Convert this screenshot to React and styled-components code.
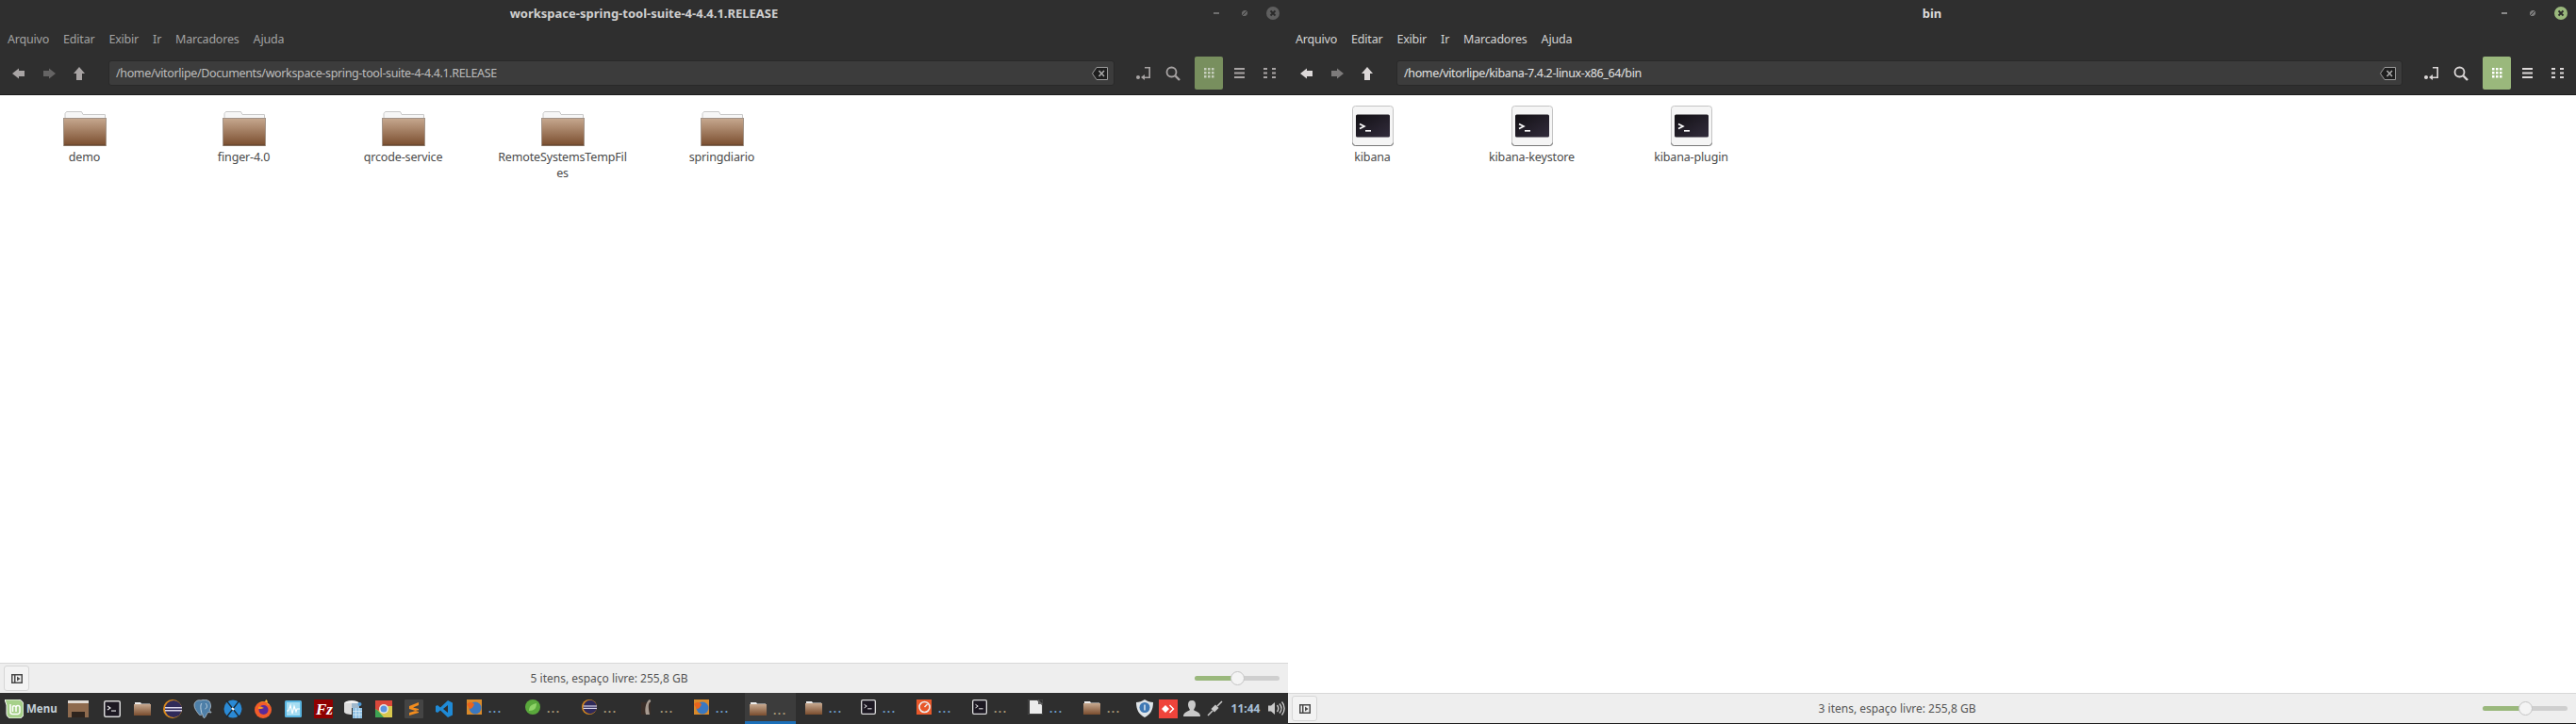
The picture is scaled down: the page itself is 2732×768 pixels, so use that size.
import React from "react";
import styled, { createGlobalStyle } from "styled-components";

const Global = createGlobalStyle`
  html, body { margin: 0; padding: 0; background: #fff; overflow: hidden; }
  * { box-sizing: border-box; }
  #root { font-family: "Noto Sans", "Open Sans", sans-serif; }
`;

const Desktop = styled.div`
  display: flex;
  width: 2732px;
  height: 768px;
`;
const LeftColumn = styled.div`
  display: flex;
  flex-direction: column;
  width: 1366px;
  height: 768px;
`;
const Win = styled.section`
  display: flex;
  flex-direction: column;
  flex: 1;
  min-height: 0;
  width: 1366px;
  background: #fff;
  border-bottom: ${(p) => (p.$active ? "1px solid #1c1c1c" : "none")};
`;
const Header = styled.header`
  background: #2f2f2f;
  border-bottom: 1px solid #1b1b1b;
  height: 101px;
  flex: none;
`;
const TitleBar = styled.div`
  display: grid;
  grid-template-columns: 1fr auto 1fr;
  align-items: center;
  height: 27px;
`;
const Title = styled.div`
  font-size: 13px;
  font-weight: 700;
  color: ${(p) => (p.$active ? "#dcdcdc" : "#cfcfcf")};
  text-align: center;
`;
const Controls = styled.div`
  display: flex;
  justify-content: flex-end;
  align-items: center;
  height: 27px;
  padding-right: 1px;
`;
const ControlBtn = styled.div`
  display: flex;
  align-items: center;
  justify-content: center;
  width: 30px;
  height: 27px;
`;
const MenuBar = styled.nav`
  display: flex;
  align-items: center;
  height: 33px;
  padding: 0 0 5px 8px;
  gap: 15px;
`;
const MenuItem = styled.span`
  font-size: 12.5px;
  letter-spacing: -0.2px;
  color: ${(p) => (p.$active ? "#d4d4d4" : "#a2a2a2")};
`;
const ToolBar = styled.div`
  display: flex;
  align-items: flex-start;
  height: 40px;
  padding: 0 4px;
`;
const ToolBtn = styled.div`
  display: flex;
  align-items: center;
  justify-content: center;
  width: 32px;
  height: 35px;
  color: ${(p) => (p.$active ? "#dcd8d8" : "#a8a4a4")};
  opacity: ${(p) => (p.$dim ? 0.45 : 1)};
`;
const ToggleBtn = styled.div`
  display: flex;
  align-items: center;
  justify-content: center;
  width: 30px;
  height: 35px;
  margin-left: 7px;
  margin-right: 1px;
  border-radius: 2px;
  background: ${(p) => (p.$active ? "#9ab87c" : "#788f5e")};
  color: ${(p) => (p.$active ? "#fff" : "#c5cdbb")};
`;
const Address = styled.div`
  display: flex;
  align-items: center;
  justify-content: space-between;
  flex: 1;
  height: 27px;
  margin: 4px 14px 0 15px;
  padding: 0 6px 0 7px;
  background: #3c3c3c;
  border: 1px solid #292929;
  border-radius: 3px;
  font-size: 12.5px;
  letter-spacing: -0.36px;
  color: ${(p) => (p.$active ? "#e2e2e2" : "#bdbdbd")};
`;
const Content = styled.main`
  flex: 1;
  min-height: 0;
  display: flex;
  align-items: flex-start;
  padding: 11px 0 0 5px;
  background: #fff;
`;
const Item = styled.div`
  display: flex;
  flex-direction: column;
  align-items: center;
  width: 169px;
`;
const IconSlot = styled.div`
  display: flex;
  align-items: flex-end;
  justify-content: center;
  height: 43px;
`;
const Label = styled.div`
  width: 140px;
  margin-top: 3px;
  font-size: 12.5px;
  line-height: 17px;
  letter-spacing: -0.15px;
  color: #4a4a4a;
  text-align: center;
  word-break: break-all;
`;
const Status = styled.footer`
  display: flex;
  align-items: center;
  flex: none;
  height: 32px;
  padding: 0 9px 0 4px;
  background: #eeeeee;
  border-top: 1px solid #d8d8d8;
`;
const PaneBtn = styled.div`
  display: flex;
  align-items: center;
  justify-content: center;
  width: 27px;
  height: 27px;
  background: #f3f3f3;
  border: 1px solid #d6d6d6;
  border-radius: 3px;
`;
const StatusText = styled.div`
  flex: 1;
  text-align: center;
  padding-right: 6px;
  font-size: 12px;
  color: #555;
`;
const Slider = styled.div`
  position: relative;
  width: 90px;
  height: 5px;
  border-radius: 3px;
  background: #cfcfcf;
`;
const SliderFill = styled.div`
  width: 50%;
  height: 100%;
  border-radius: 3px 0 0 3px;
  background: #9ab87c;
`;
const SliderThumb = styled.div`
  position: absolute;
  left: 38px;
  top: -5px;
  width: 15px;
  height: 15px;
  border-radius: 50%;
  background: #f4f4f4;
  border: 1px solid #c4c4c4;
`;
const Task = styled.div`
  display: flex;
  align-items: center;
  flex: none;
  height: 33px;
  padding-left: 5px;
  background: #2e2e2e;
`;
const MenuButton = styled.div`
  display: flex;
  align-items: center;
  gap: 3px;
  width: 60px;
  font-size: 11.5px;
  font-weight: 700;
  color: #c6d2da;
`;
const Launchers = styled.div`
  display: flex;
  align-items: center;
  margin-left: 2px;
`;
const Launcher = styled.div`
  display: flex;
  align-items: center;
  justify-content: center;
  width: 32px;
  height: 33px;
  &:first-child { margin-right: 4px; }
`;
const WinList = styled.div`
  display: flex;
  align-items: center;
  height: 33px;
  margin-left: 3px;
`;
const WinBtn = styled.div`
  display: flex;
  align-items: center;
  flex: none;
  width: ${(p) => p.$w}px;
  height: 33px;
`;
const WinInner = styled.div`
  display: flex;
  align-items: center;
  width: 54px;
  height: 33px;
  padding-left: 5px;
  gap: 7px;
  background: ${(p) => (p.$on ? "#3c3c3c" : "transparent")};
  border-bottom: 3px solid ${(p) => (p.$on ? "#1c6fb8" : "transparent")};
  padding-top: ${(p) => (p.$on ? "3px" : "0")};
`;
const Dots = styled.span`
  font-size: 12px;
  font-weight: 700;
  letter-spacing: 1.5px;
  color: ${(p) => (p.$warm ? "#a89a78" : "#6f9fcb")};
  padding-top: 3px;
`;
const Tray = styled.div`
  display: flex;
  align-items: center;
  margin-left: auto;
  height: 33px;
`;
const TraySlot = styled.div`
  display: flex;
  align-items: center;
  justify-content: center;
  width: 25px;
  height: 33px;
`;
const Clock = styled.div`
  width: 36px;
  margin: 0 2px;
  font-size: 12px;
  font-weight: 700;
  text-align: center;
  white-space: nowrap;
  color: #a9c0d6;
`;

/* ---------- drawings ---------- */
const Back = () => (
  <svg width="14" height="12" viewBox="0 0 14 12"><path d="M0 6 7 .5V3h6v6H7v2.500z" fill="currentColor" /></svg>
);
const Forward = () => (
  <svg width="14" height="12" viewBox="0 0 14 12"><path d="M14 6 7 .5V3H1v6h6v2.500z" fill="currentColor" /></svg>
);
const Up = () => (
  <svg width="12" height="14" viewBox="0 0 12 14"><path d="M6 0 12 7H9v7H3V7H0z" fill="currentColor" /></svg>
);
const Clear = () => (
  <svg width="17" height="14" viewBox="0 0 17 14">
    <path d="M5 .5h11.500v13H5L.5 7z" fill="#1e1e1e" stroke="#9c9c9c" />
    <path d="M7.500 4 13 10M13 4l-5.500 6" stroke="#a8a8a8" strokeWidth="1.600" />
  </svg>
);
const ReturnIcon = () => (
  <svg width="15" height="14" viewBox="0 0 15 14" fill="currentColor">
    <circle cx="2" cy="11" r="2" />
    <path d="M9 0h6v12H8v-1.600h5.400V1.600H9z" />
    <path d="M5 11 9 8v6z" />
  </svg>
);
const SearchIcon = () => (
  <svg width="16" height="16" viewBox="0 0 16 16" fill="none" stroke="currentColor">
    <circle cx="6.500" cy="6.500" r="5" strokeWidth="1.800" />
    <path d="M10.500 10.500 15 15" strokeWidth="2.400" />
  </svg>
);
const GridIcon = () => (
  <svg width="11" height="11" viewBox="0 0 11 11" fill="currentColor">
    {[0, 4, 8].flatMap((y) => [0, 4, 8].map((x) => <rect key={`${x}${y}`} x={x} y={y} width="2.500" height="2.500" />))}
  </svg>
);
const ListIcon = () => (
  <svg width="11" height="11" viewBox="0 0 11 11" fill="currentColor">
    <rect y="0" width="11" height="2" /><rect y="4.500" width="11" height="2" /><rect y="9" width="11" height="2" />
  </svg>
);
const CompactIcon = () => (
  <svg width="13" height="11" viewBox="0 0 13 11" fill="currentColor">
    {[0, 4.500, 9].flatMap((y) => [
      <rect key={`a${y}`} x="0" y={y} width="4" height="2" />,
      <rect key={`b${y}`} x="9" y={y} width="4" height="2" />,
    ])}
  </svg>
);
const PaneIcon = () => (
  <svg width="12" height="10" viewBox="0 0 12 10">
    <rect x=".75" y=".75" width="10.500" height="8.500" fill="none" stroke="#4a4a4a" strokeWidth="1.500" />
    <rect x="3" y="1" width="1.500" height="8" fill="#4a4a4a" />
    <path d="M6 2.500 9.500 5 6 7.500z" fill="#4a4a4a" />
  </svg>
);
const CloseIcon = ({ active }) => (
  <svg width="14" height="14" viewBox="0 0 14 14">
    <circle cx="7" cy="7" r="7" fill={active ? "#9ab87c" : "#5f5f5f"} />
    <path d="M4.500 4.500l5 5M9.500 4.500l-5 5" stroke="#2a2a2a" strokeWidth="1.800" />
  </svg>
);
const MinIcon = ({ active }) => (
  <svg width="6" height="2" viewBox="0 0 6 2"><rect width="6" height="2" fill={active ? "#8a8a8a" : "#6e6e6e"} /></svg>
);
const MaxIcon = ({ active }) => (
  <svg width="6" height="6" viewBox="0 0 6 6"><path d="M0 2 2 0h4v4L4 6H0z" fill={active ? "#7a7a7a" : "#666"} /><path d="M0 6 6 0" stroke="#2f2f2f" /></svg>
);

const BigFolder = () => (
  <svg width="46" height="37" viewBox="0 0 46 37">
    <defs>
      <linearGradient id="fb" x1="0" y1="0" x2="0" y2="1">
        <stop offset="0" stopColor="#c6a88f" />
        <stop offset="1" stopColor="#7a4d2e" />
      </linearGradient>
    </defs>
    <path d="M2 8V2.500L3.500 .5h16L21 3.500h23.500V8z" fill="#f6f6f6" stroke="#c8c8c8" />
    <rect x=".5" y="7.500" width="45" height="29" fill="url(#fb)" stroke="#a39488" />
    <rect x="1" y="35" width="44" height="1.500" fill="#6b4a33" />
  </svg>
);
const BigTerminal = () => (
  <svg width="44" height="43" viewBox="0 0 44 43">
    <defs>
      <linearGradient id="tb" x1="0" y1="0" x2="1" y2="1">
        <stop offset="0" stopColor="#121014" />
        <stop offset="1" stopColor="#322c3c" />
      </linearGradient>
    </defs>
    <rect x=".5" y=".5" width="43" height="42" rx="3" fill="#f5f5f5" stroke="#c4c4c4" />
    <path d="M.5 39.500v.000a3 3 0 0 0 3 3h37a3 3 0 0 0 3-3" fill="none" stroke="#777" />
    <rect x="4" y="9.500" width="36" height="24" rx="1.500" fill="url(#tb)" />
    <path d="M8 19.500l5 2.500-5 2.500" fill="none" stroke="#fff" strokeWidth="1.600" />
    <rect x="14" y="26" width="6" height="1.600" fill="#fff" />
  </svg>
);
const SmallFolder = ({ w = 18 }) => (
  <svg width={w} height="15" viewBox="0 0 18 15">
    <defs>
      <linearGradient id="sf" x1="0" y1="0" x2="0" y2="1">
        <stop offset="0" stopColor="#c6a88f" />
        <stop offset="1" stopColor="#7a4d2e" />
      </linearGradient>
    </defs>
    <path d="M1 3V1h6l1 1.500h9V3z" fill="#eee" />
    <rect y="3" width="18" height="12" fill="url(#sf)" />
  </svg>
);
const SmallTerminal = ({ s = 18 }) => (
  <svg width={s} height={s} viewBox="0 0 18 18">
    <rect x=".75" y=".75" width="16.500" height="16.500" rx="1.500" fill="#1c1822" stroke="#d8d8d8" strokeWidth="1.500" />
    <path d="M4 6l3 2-3 2" fill="none" stroke="#eee" strokeWidth="1.100" />
    <rect x="8" y="10.500" width="5" height="1.100" fill="#eee" />
  </svg>
);
const Mint = () => (
  <svg width="20" height="20" viewBox="0 0 20 20">
    <path d="M0 0h14a6 6 0 0 1 6 6v9a5 5 0 0 1-5 5H7a5 5 0 0 1-5-5V6z" fill="#a6d08a" stroke="#fff" strokeWidth="1" />
    <path d="M6 5v8a2.500 2.500 0 0 0 2.500 2.500h5A2.500 2.500 0 0 0 16 13V8.500a2 2 0 0 0-4 0V13M12 8.500a2 2 0 0 0-3.500-1V13" fill="none" stroke="#fff" strokeWidth="1.500" />
  </svg>
);
const FileManager = () => (
  <svg width="22" height="18" viewBox="0 0 22 18">
    <rect width="22" height="3" fill="#e2dcd6" />
    <rect y="3" width="22" height="15" fill="#8e6a4e" />
    <rect x="4" y="12" width="14" height="6" fill="#2e241e" />
  </svg>
);
const Eclipse = ({ s = 20 }) => (
  <svg width={s} height={s} viewBox="0 0 20 20">
    <circle cx="10" cy="10" r="10" fill="#d98a1e" />
    <circle cx="11" cy="10" r="9" fill="#2f2a5a" />
    <rect x="2" y="8" width="18" height="1.500" fill="#d8d4e8" />
    <rect x="2" y="11" width="18" height="1.500" fill="#d8d4e8" />
  </svg>
);
const Elephant = () => (
  <svg width="20" height="20" viewBox="0 0 20 20">
    <path d="M1 6C1 2 5 0 8 1c2-1 7-1 9 1 2 3 2 7 0 9 1 2 2 2 2 3l-3-.500c-2 1-2 4-4 6-2 0-2-2-2-4-2 2-4 1-5-1C3 12 1 9 1 6z" fill="#4e7fa8" stroke="#c8d4de" strokeWidth=".700" />
    <path d="M9 4c-2 2-1 7 0 11M13 4c2 2 2 5-.500 6" fill="none" stroke="#dbe4ec" strokeWidth=".800" />
  </svg>
);
const Compass = () => (
  <svg width="20" height="20" viewBox="0 0 20 20">
    <circle cx="10" cy="10" r="9.500" fill="#2a8ad6" />
    <path d="M3 1 17 19M17 1 3 19" stroke="#1e2a34" strokeWidth="1.300" />
    <path d="M9 9l2 2" stroke="#fff" strokeWidth="2" />
  </svg>
);
const Firefox = ({ s = 20 }) => (
  <svg width={s} height={s} viewBox="0 0 20 20">
    <circle cx="10" cy="11" r="9" fill="#f25c2a" />
    <path d="M3 4c2 0 3-1 4-1 4-2 9 0 11 5-1-2-3-3-4-3 2-2 0-5-1-5 0 2-2 2-4 3z" fill="#fbb02e" />
    <circle cx="10.500" cy="11" r="5" fill="#5a2a9a" />
    <path d="M5 8c2-1 4 0 6 1-2 1-4 1-6 1z" fill="#f7941e" />
  </svg>
);
const OldFirefox = () => (
  <svg width="16" height="16" viewBox="0 0 16 16">
    <rect width="16" height="16" fill="#d98a2a" />
    <circle cx="9" cy="9" r="6.500" fill="#3a78c0" />
    <path d="M0 5c3-3 6-2 8 0-1 3-3 5-5 5z" fill="#e8641e" />
  </svg>
);
const Monitor = () => (
  <svg width="18" height="18" viewBox="0 0 18 18">
    <rect width="18" height="18" rx="1.500" fill="#58b4e0" />
    <rect x="2" y="2" width="14" height="14" fill="#a4dcf2" />
    <path d="M2 11h2l2-6 2 9 2-8 2 6 1-3h3" fill="none" stroke="#fff" strokeWidth="1.100" />
  </svg>
);
const Spring = () => (
  <svg width="16" height="16" viewBox="0 0 16 16">
    <circle cx="8" cy="8" r="8" fill="#5aa83c" />
    <path d="M4 12c0-5 3-7 8-8 0 5-2 8-8 8z" fill="#8fd468" />
  </svg>
);
const FzText = styled.text`
  font-family: "Liberation Serif", serif;
  font-size: 17px;
  font-weight: 700;
  font-style: italic;
  fill: #fff;
`;
const FileZilla = () => (
  <svg width="20" height="20" viewBox="0 0 20 20">
    <rect width="20" height="20" fill="#8f0000" />
    <FzText x="2" y="16">Fz</FzText>
  </svg>
);
const DbIcon = () => (
  <svg width="20" height="20" viewBox="0 0 20 20">
    <ellipse cx="8" cy="4" rx="8" ry="3" fill="#f2f2f2" />
    <path d="M0 4v9c0 2 4 3 8 3V4z" fill="#dcdcdc" />
    <path d="M16 4v5H8V4z" fill="#9fb8cc" />
    <rect x="9" y="9" width="10" height="11" fill="#8ec0e4" />
    <path d="M9 12.500h10M9 16h10M12.500 9v11M16 9v11" stroke="#e4f0f8" strokeWidth=".700" />
    <circle cx="16.500" cy="5" r="2" fill="#4e9ad6" />
  </svg>
);
const Chrome = () => (
  <svg width="18" height="18" viewBox="0 0 18 18">
    <rect width="18" height="18" fill="#d8c84e" />
    <path d="M0 0h18v6H9L3 11 0 9z" fill="#d9483b" />
    <path d="M0 9 3 11l6 7H0z" fill="#3ea354" />
    <circle cx="9" cy="9" r="5" fill="#e8e8e8" />
    <circle cx="9" cy="9" r="3.500" fill="#5a94e0" />
  </svg>
);
const Sublime = () => (
  <svg width="20" height="20" viewBox="0 0 20 20">
    <rect width="20" height="20" rx="1" fill="#444" />
    <path d="M15 3 5 7v3l10 3v-3L9 8.500 15 6zM5 14l10-3v3L5 17z" fill="#f28c1e" />
  </svg>
);
const VsCode = () => (
  <svg width="18" height="18" viewBox="0 0 18 18">
    <path d="M13 0 18 2.500v13L13 18 5 10.500 2 13 0 12V6l2-1 3 2.500zM13 5 8 9l5 4z" fill="#1f8ad6" />
  </svg>
);
const Rhythm = () => (
  <svg width="14" height="16" viewBox="0 0 14 16">
    <rect x="1" y="3" width="10" height="13" fill="#3a2e28" />
    <path d="M6 16C4 9 7 1 10 0c2 1 1 3 0 3-2 2-1 8 0 13z" fill="#a89c92" />
  </svg>
);
const Recorder = () => (
  <svg width="16" height="16" viewBox="0 0 16 16">
    <rect width="16" height="16" fill="#e8582a" />
    <circle cx="8.500" cy="8" r="5.500" fill="none" stroke="#eee" strokeWidth="1.600" />
    <path d="M8.500 8l3-3" stroke="#eee" strokeWidth="1.500" />
  </svg>
);
const Doc = () => (
  <svg width="16" height="16" viewBox="0 0 16 16">
    <rect width="16" height="16" rx="1" fill="#2e2e2e" stroke="#555" />
    <path d="M2 1h8l5 5v9H2z" fill="#ececec" />
    <path d="M11 0l5 5h-5z" fill="#666" />
  </svg>
);
const Shield = () => (
  <svg width="18" height="19" viewBox="0 0 18 19">
    <path d="M9 0c3 2 6 3 9 3 0 8-3 13-9 16C3 16 0 11 0 3c3 0 6-1 9-3z" fill="#dfe4e8" />
    <circle cx="9" cy="8.500" r="5.500" fill="#3e78b4" />
    <rect x="8.300" y="5.500" width="1.400" height="6" fill="#e8eef4" />
  </svg>
);
const AnyDesk = () => (
  <svg width="20" height="20" viewBox="0 0 20 20">
    <rect width="20" height="20" fill="#ef443b" />
    <path d="M7 6l4 4-4 4-4-4z" fill="#fff" />
    <path d="M12 5.500 16.500 10 12 14.500l-1-1L14.500 10 11 6.500z" fill="#fff" />
  </svg>
);
const UserIcon = () => (
  <svg width="18" height="17" viewBox="0 0 18 17">
    <path d="M9 0c3 0 4 2 4 4.500S11.500 9 11 10c1 1.500 7 2 7 7H0c0-5 6-5.500 7-7-.5-1-2-3-2-5.500S6 0 9 0z" fill="#c9c9c9" />
  </svg>
);
const PlugIcon = () => (
  <svg width="17" height="17" viewBox="0 0 17 17">
    <path d="M1 16 6 11M11 6l5-5" stroke="#c9c9c9" strokeWidth="1.500" />
    <path d="M4.500 9 8 5.500l1-1 3.500 3.500-1 1L8 12.500z" fill="#c9c9c9" />
  </svg>
);
const Volume = () => (
  <svg width="18" height="17" viewBox="0 0 18 17" fill="none" stroke="#c9c9c9">
    <path d="M0 5.500h3L7 2v13l-4-3.500H0z" fill="#c9c9c9" stroke="none" />
    <path d="M9.500 5c1.500 2 1.500 5 0 7M12 3.500c2.500 3 2.500 7 0 10M14.500 1.500c3.500 4 3.500 10 0 14" strokeWidth="1.400" />
  </svg>
);

const menus = ["Arquivo", "Editar", "Exibir", "Ir", "Marcadores", "Ajuda"];

const FileWindow = ({ active, title, path, items, status, IconC }) => (
  <Win $active={active}>
    <Header>
      <TitleBar>
        <span />
        <Title $active={active}>{title}</Title>
        <Controls>
          <ControlBtn><MinIcon active={active} /></ControlBtn>
          <ControlBtn><MaxIcon active={active} /></ControlBtn>
          <ControlBtn><CloseIcon active={active} /></ControlBtn>
        </Controls>
      </TitleBar>
      <MenuBar>
        {menus.map((m) => <MenuItem key={m} $active={active}>{m}</MenuItem>)}
      </MenuBar>
      <ToolBar>
        <ToolBtn $active={active}><Back /></ToolBtn>
        <ToolBtn $active={active} $dim><Forward /></ToolBtn>
        <ToolBtn $active={active}><Up /></ToolBtn>
        <Address $active={active}>
          <span>{path}</span>
          <Clear />
        </Address>
        <ToolBtn $active={active}><ReturnIcon /></ToolBtn>
        <ToolBtn $active={active}><SearchIcon /></ToolBtn>
        <ToggleBtn $active={active}><GridIcon /></ToggleBtn>
        <ToolBtn $active={active}><ListIcon /></ToolBtn>
        <ToolBtn $active={active}><CompactIcon /></ToolBtn>
      </ToolBar>
    </Header>
    <Content>
      {items.map((n) => (
        <Item key={n}>
          <IconSlot><IconC /></IconSlot>
          <Label>{n}</Label>
        </Item>
      ))}
    </Content>
    <Status>
      <PaneBtn><PaneIcon /></PaneBtn>
      <StatusText>{status}</StatusText>
      <Slider>
        <SliderFill />
        <SliderThumb />
      </Slider>
    </Status>
  </Win>
);

const launchers = [FileManager, SmallTerminal, SmallFolder, Eclipse, Elephant, Compass, Firefox, Monitor, FileZilla, DbIcon, Chrome, Sublime, VsCode];

const windows = [
  { I: OldFirefox, w: 62 },
  { I: Spring, w: 60, warm: true },
  { I: () => <Eclipse s={16} />, w: 62, warm: true },
  { I: Rhythm, w: 57, warm: true },
  { I: OldFirefox, w: 59 },
  { I: SmallFolder, w: 59, on: true, warm: true },
  { I: SmallFolder, w: 59 },
  { I: () => <SmallTerminal s={16} />, w: 59 },
  { I: Recorder, w: 59 },
  { I: () => <SmallTerminal s={16} />, w: 59, warm: true },
  { I: Doc, w: 59 },
  { I: SmallFolder, w: 54, warm: true },
];

export default function App() {
  return (
    <Desktop>
      <Global />
      <LeftColumn>
        <FileWindow
          title="workspace-spring-tool-suite-4-4.4.1.RELEASE"
          path="/home/vitorlipe/Documents/workspace-spring-tool-suite-4-4.4.1.RELEASE"
          items={["demo", "finger-4.0", "qrcode-service", "RemoteSystemsTempFiles", "springdiario"]}
          status="5 itens, espaço livre: 255,8 GB"
          IconC={BigFolder}
        />
        <Task>
          <MenuButton><Mint />Menu</MenuButton>
          <Launchers>
            {launchers.map((L, i) => <Launcher key={i}><L /></Launcher>)}
          </Launchers>
          <WinList>
            {windows.map(({ I, w, on, warm }, i) => (
              <WinBtn key={i} $w={w}>
                <WinInner $on={on}><I /><Dots $warm={warm}>...</Dots></WinInner>
              </WinBtn>
            ))}
          </WinList>
          <Tray>
            <TraySlot><Shield /></TraySlot>
            <TraySlot><AnyDesk /></TraySlot>
            <TraySlot><UserIcon /></TraySlot>
            <TraySlot><PlugIcon /></TraySlot>
            <Clock>11:44</Clock>
            <TraySlot><Volume /></TraySlot>
          </Tray>
        </Task>
      </LeftColumn>
      <FileWindow
        active
        title="bin"
        path="/home/vitorlipe/kibana-7.4.2-linux-x86_64/bin"
        items={["kibana", "kibana-keystore", "kibana-plugin"]}
        status="3 itens, espaço livre: 255,8 GB"
        IconC={BigTerminal}
      />
    </Desktop>
  );
}
